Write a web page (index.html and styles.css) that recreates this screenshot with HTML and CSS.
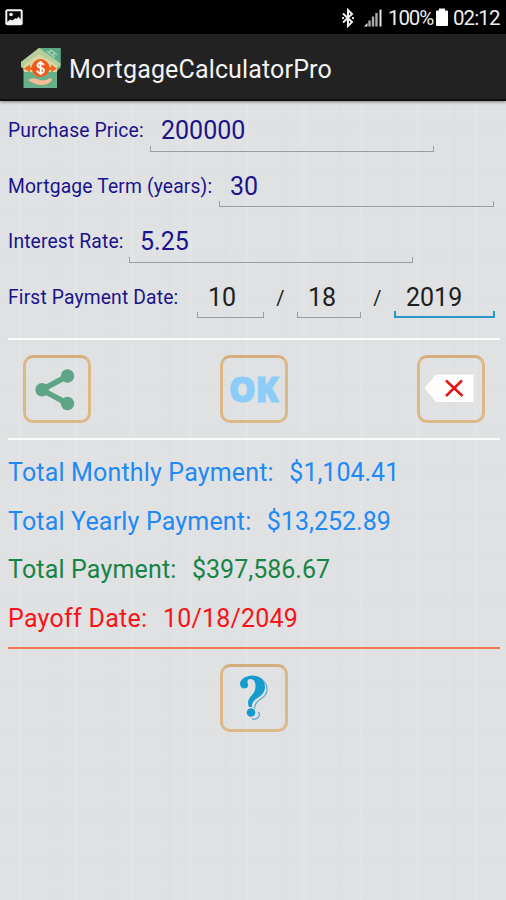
FILE: index.html
```html
<!DOCTYPE html>
<html lang="en">
<head>
<meta charset="utf-8">
<title>MortgageCalculatorPro</title>
<link rel="stylesheet" href="styles.css">
</head>
<body>
<div class="status">
  <svg class="photo" width="18" height="17" viewBox="0 0 18 17"><rect x=".3" y=".3" width="17.4" height="16" rx="2" fill="#f4f4f4"/><path d="M2.3 2.300h13.400v8.200l-1.900-2.700-2 2-1.500-.6-3 2.300-2.200-1-2.800 2.500z" fill="#050505"/><circle cx="6" cy="5.500" r="1.800" fill="#fff"/></svg>
  <div class="indicators">
    <svg class="bt" width="14" height="20" viewBox="0 0 14 20"><path d="M2 5.500l9 8.500-4 4V2l4 4-9 8.500" fill="none" stroke="#eee" stroke-width="2"/><path d="M1 10h2M11 10h2" stroke="#ddd" stroke-width="2"/></svg>
    <svg class="signal" width="18" height="18" viewBox="0 0 18 18"><path d="M0 17.500l3.500-3.500v3.500z" fill="#eee"/><path d="M5.500 17.500v-6M9 17.500v-10M12.500 17.500V4" stroke="#aaa" stroke-width="2.400"/><path d="M16.500 17.500V.5" stroke="#e5e5e5" stroke-width="2"/></svg>
    <span class="pct">100%</span>
    <svg class="battery" width="12" height="19" viewBox="0 0 12 19"><path d="M3 .5h6v2h2q1 0 1 1V17q0 1-1 1H1q-1 0-1-1V3.500q0-1 1-1h2z" fill="#fff"/></svg>
    <span class="clock">02:12</span>
  </div>
</div>
<header class="appbar">
  <svg class="logo" width="40" height="42" viewBox="0 0 40 42">
    <path d="M18 1h21.500v20L36 23v18H2.500V22L0 20v-5z" fill="#68af8c"/>
    <path d="M18 1L0 15v5l2.500 1v3h34v-4l3-1v-3z" fill="#b5ce9a"/>
    <path d="M18 7L3 18v9h33v-9z" fill="#d7d6a3"/>
    <path d="M20 1h19.500v15.500z" fill="#5da986"/>
    <path d="M26 4l8 6.500M30 3l6 5M27 6l3-3M31 9l3-3" stroke="#a9d4b7" stroke-width="1.200"/>
    <path d="M3 25h33v15.500H3z" fill="#69af8c"/>
    <path d="M3 21.500l6-4v2.500h21v-2.500l6 4-6 4V23H9v2.500z" fill="#f26a25"/>
    <circle cx="19.500" cy="21" r="9" fill="#f15a1c"/>
    <path d="M22.700 18q-.8-2.200-3.200-2.200-3 0-3 2.500 0 1.900 3.300 2.500 3.200.7 3.200 2.800 0 2.500-3.500 2.500-3 0-3.300-2.600M19.600 14v14" fill="none" stroke="#fff" stroke-width="1.800"/>
    <path d="M7 33q5-3 9-1l5 1.500q5 0 8-2.500 3 0 1 3.500-4 3.500-9 3.500-7 0-14-5z" fill="#f5bd91"/>
  </svg>
  <h1>MortgageCalculatorPro</h1>
</header>
<main>
  <div class="row"><label class="l1">Purchase Price:</label><div class="field f1">200000</div></div>
  <div class="row"><label class="l2">Mortgage Term (years):</label><div class="field f2">30</div></div>
  <div class="row"><label class="l3">Interest Rate:</label><div class="field f3">5.25</div></div>
  <div class="row date"><label class="l4">First Payment Date:</label><div class="field month">10</div><span class="slash">/</span><div class="field day">18</div><span class="slash">/</span><div class="field year">2019</div></div>
  <div class="actions">
    <button class="tile" aria-label="Share"><svg width="68" height="68" viewBox="0 0 68 68"><path d="M44.500 21L19 34.800 44.500 48.500" fill="none" stroke="#5ea487" stroke-width="5.500"/><circle cx="44.500" cy="21" r="6.700" fill="#5ea487"/><circle cx="19" cy="34.800" r="6.700" fill="#5ea487"/><circle cx="44.500" cy="48.500" r="6.700" fill="#5ea487"/></svg></button>
    <button class="tile ok"><span>OK</span></button>
    <button class="tile" aria-label="Clear"><svg width="68" height="68" viewBox="0 0 68 68"><path d="M7.500 33L19 19.500h37.500V47H19z" fill="#fffefc"/><path d="M29 25.500L45.500 41M45 25.500L29 41" stroke="#e31515" stroke-width="2.500"/></svg></button>
  </div>
  <div class="results">
    <p class="blue"><span>Total Monthly Payment:</span>$1,104.41</p>
    <p class="blue"><span>Total Yearly Payment:</span>$13,252.89</p>
    <p class="green"><span>Total Payment:</span>$397,586.67</p>
    <p class="red"><span>Payoff Date:</span>10/18/2049</p>
  </div>
  <button class="tile help" aria-label="Help"><svg width="68" height="68" viewBox="0 0 68 68">
    <path d="M36 13.500q11 2 11 12 0 6-7 10-5 3-5.500 9M38 48q3 2 0 5.500-3 3-6 1" fill="none" stroke="#5da9c9" stroke-width="1.200"/>
    <path d="M20 20q0-4 4.500-6.500 4-2 8.500-2 12 1 12 12 0 6-7.500 10.500-6 3.500-5.500 9h-3q-3-6 3-12 4-4 3.500-10-.5-6-5-6-3.500 0-3 3.500 2 6-3.500 6-3.500-.5-4-4.500z" fill="#159bcd"/>
    <circle cx="31" cy="48.500" r="4.300" fill="#159bcd"/>
  </svg></button>
</main>
</body>
</html>
```
FILE: styles.css
```css
* { box-sizing: border-box; }
body {
  margin: 0;
  width: 506px;
  height: 900px;
  overflow: hidden;
  font-family: Roboto, "Liberation Sans", sans-serif;
  background-color: #dfe1e3;
  background-image:
    repeating-linear-gradient(90deg, transparent 0 17px, rgba(255,255,255,.09) 18px 20px, transparent 21px 53px, rgba(190,195,198,.04) 54px 57px),
    repeating-linear-gradient(0deg, transparent 0 13px, rgba(255,255,255,.07) 14px 15px, transparent 16px 40px, rgba(190,195,198,.04) 41px 43px);
}
.status {
  height: 34px;
  background: #000;
  display: flex;
  justify-content: space-between;
  padding: 0 5px;
  color: #eee;
  font-size: 20.5px;
  line-height: 36px;
}
.photo { margin-top: 9px; }
.indicators { display: flex; }
.bt { margin: 8px 9px 0 0; }
.signal { margin: 9px 6px 0 0; }
.pct { width: 44px; margin-right: 4px; letter-spacing: -1.1px; white-space: nowrap; }
.battery { margin: 8px 5px 0 0; }
.clock { width: 48px; letter-spacing: -.9px; white-space: nowrap; }
.appbar {
  height: 67px;
  background: #222;
  border-bottom: 2px solid #101010;
  box-shadow: 0 1px 3px rgba(0,0,0,.45);
  display: flex;
  padding-left: 21px;
}
.logo { margin-top: 13px; }
h1 {
  margin: 0 0 0 8px;
  color: #f2f2f2;
  font-size: 25px;
  font-weight: 400;
  letter-spacing: .15px;
  line-height: 71px;
}
main { padding: 0 6px 0 8px; }
.row {
  display: flex;
  height: 55.5px;
  color: #1b138c;
}
label { font-size: 19.3px; letter-spacing: .14px; line-height: 60px; white-space: nowrap; flex: none; }
.l1 { width: 142px; }
.l2 { width: 211px; }
.l3 { width: 121px; }
.l4 { width: 189px; }
.field {
  position: relative;
  flex: none;
  height: 50.5px;
  padding-left: 11px;
  font-size: 25px;
  line-height: 60px;
}
.field::after {
  content: "";
  position: absolute;
  left: 0;
  right: 0;
  bottom: 0;
  height: 5px;
  border: 1px solid #9b9da0;
  border-top: 0;
}
.f1 { width: 284px; }
.f2 { width: 275px; }
.f3 { width: 284px; }
.date .field, .slash { color: #202020; }
.date .year { padding-left: 12px; }
.month { width: 67px; }
.day { width: 64px; }
.year { width: 101px; }
.year::after { border-color: #2b96c8; border-width: 0 2px 2px; }
.slash { width: 33px; text-align: center; font-size: 20px; line-height: 60px; flex: none; }
.actions {
  display: flex;
  justify-content: space-between;
  height: 102px;
  margin-top: 15px;
  padding: 15px 15px 0;
  border-top: 2px solid #fafbfb;
  border-bottom: 2px solid #fafbfb;
}
.tile {
  width: 68px;
  height: 68px;
  padding: 0;
  border: 3px solid #dcb887;
  border-top-color: #d5ae80;
  border-radius: 10px;
  background: transparent;
  display: flex;
  align-items: center;
  justify-content: center;
}
.tile svg { flex: none; }
.ok {
  font: 800 35px "Open Sans", sans-serif;
  color: #8bcdf8;
  -webkit-text-stroke: 1px #8bcdf8;
}
.ok span { transform: translateY(-1px) scaleX(.96); }
.results { border-bottom: 2px solid #ed7950; height: 209px; padding-top: 7px; }
.results p { margin: 0; height: 48.6px; line-height: 51px; font-size: 25px; white-space: nowrap; letter-spacing: 0; }
.results span { letter-spacing: .17px; margin-right: 15.500px; }
.blue { color: #2089f5; }
.green { color: #178446; }
.red { color: #fa1317; }
.results .red { letter-spacing: .2px; }
.red span { letter-spacing: .28px; }
.help { margin: 15px auto 0 212px; }
```
